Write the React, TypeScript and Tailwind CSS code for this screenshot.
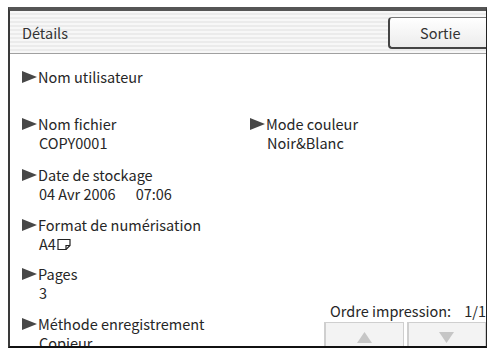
import React from 'react';

const font = { fontFamily: '"Noto Sans CJK JP", "Noto Sans", sans-serif' };

function Arrow() {
  return (
    <svg width="15" height="12" viewBox="0 0 15 12" className="shrink-0 mr-[1px]">
      <polygon points="0,0 15,6 0,12" fill="#474747" />
    </svg>
  );
}

function PaperIcon() {
  return (
    <svg width="14" height="12" viewBox="0 0 14 12" className="ml-[1px]">
      <path d="M1 1.5 H13 V7.5 L9 11.5 H1 Z" fill="none" stroke="#222" strokeWidth="1.2" />
      <path d="M13 7.5 H9 V11.5" fill="none" stroke="#222" strokeWidth="1.2" />
    </svg>
  );
}

function Field({ label, value, className = '' }: { label: string; value?: React.ReactNode; className?: string }) {
  return (
    <div className={className}>
      <div className="flex items-center h-[19px]">
        <Arrow />
        <span>{label}</span>
      </div>
      {value !== undefined && <div className="h-[19px] pl-[17px] flex items-center whitespace-pre">{value}</div>}
    </div>
  );
}

function ScrollButton({ up }: { up?: boolean }) {
  return (
    <div className="h-[32px] flex-1 bg-[#f3f3f3] border border-[#cfcfcf] border-l-2 flex justify-center pt-[9px]">
      <svg width="15" height="11" viewBox="0 0 15 11">
        {up ? <polygon points="7.5,0 15,11 0,11" fill="#c6c6c6" /> : <polygon points="0,0 15,0 7.5,11" fill="#c6c6c6" />}
      </svg>
    </div>
  );
}

export default function App() {
  return (
    <div className="w-[490px] h-[351px] bg-white pt-[7px] pl-[8px] pr-[3px] pb-[3px] text-[#262626] text-[14.5px] leading-[19px]" style={font}>
      <div className="h-full flex flex-col border-t-4 border-t-[#555] border-l-2 border-l-[#3a3a3a] border-r border-r-[#222] border-b-2 border-b-[#111] overflow-hidden">
        <div className="h-[43px] shrink-0 flex items-center justify-between border-b border-[#a0a0a0] bg-[repeating-linear-gradient(to_bottom,#f7f7f7_0px,#f7f7f7_2px,#ebebeb_2px,#ebebeb_4px)] pl-[12px] overflow-hidden">
          <span className="text-[#333]">Détails</span>
          <div className="w-[108px] h-[32px] mr-[-10px] mt-[1px] rounded-[4px] border border-[#777] border-l-2 border-l-[#444] border-b-2 border-b-[#444] bg-[linear-gradient(#ffffff,#ececec)] flex items-center pl-[30px] text-[#333]">
            Sortie
          </div>
        </div>
        <div className="flex-1 flex overflow-hidden bg-white">
          <div className="w-[240px] shrink-0 pl-[12px] pt-[13px] flex flex-col">
            <Field label="Nom utilisateur" className="mb-[28px]" />
            <Field label="Nom fichier" value="COPY0001" className="mb-[13px]" />
            <Field
              label="Date de stockage"
              value={
                <span className="flex">
                  <span>04 Avr 2006</span>
                  <span className="ml-[20px]">07:06</span>
                </span>
              }
              className="mb-[12px]"
            />
            <Field
              label="Format de numérisation"
              value={
                <span className="flex items-center">
                  A4
                  <PaperIcon />
                </span>
              }
              className="mb-[11px]"
            />
            <Field label="Pages" value="3" className="mb-[12px]" />
            <Field label="Méthode enregistrement" value="Copieur" />
          </div>
          <div className="flex-1 flex flex-col pt-[60px]">
            <Field label="Mode couleur" value="Noir&Blanc" />
            <div className="mt-auto self-end w-[162px] mb-[-8px]">
              <div className="flex h-[19px] items-center justify-between pl-[6px] mb-[2px] whitespace-nowrap">
                <span>Ordre impression:</span>
                <span>1/1</span>
              </div>
              <div className="flex gap-[3px]">
                <ScrollButton up />
                <ScrollButton />
              </div>
            </div>
          </div>
        </div>
      </div>
    </div>
  );
}
